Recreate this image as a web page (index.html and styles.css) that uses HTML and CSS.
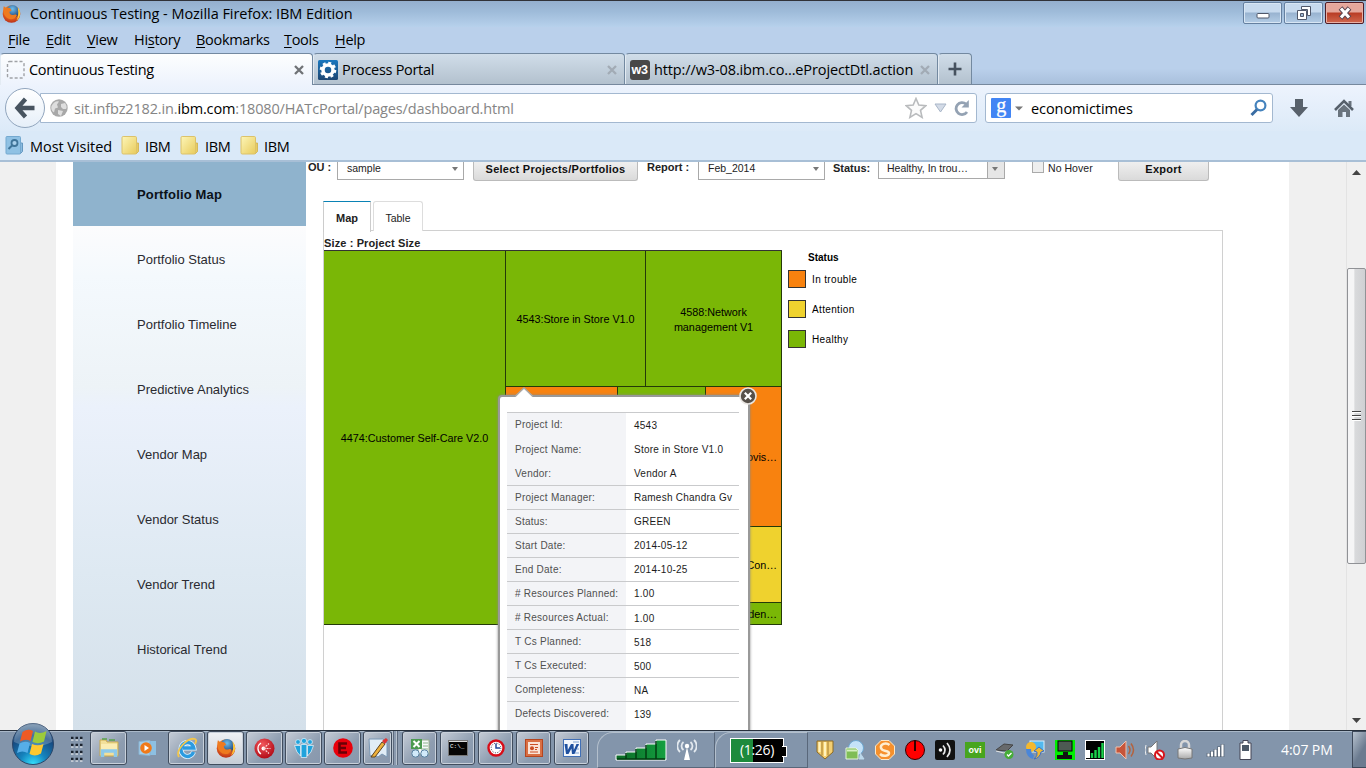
FILE: index.html
```html
<!DOCTYPE html>
<html lang="en">
<head>
<meta charset="utf-8">
<title>Continuous Testing</title>
<link rel="stylesheet" href="styles.css">
</head>
<body>
<svg width="0" height="0" class="defs">
  <defs>
    <linearGradient id="gFolder" x1="0" y1="0" x2="1" y2="1"><stop offset="0" stop-color="#fdf6b8"/><stop offset="1" stop-color="#e8cb5c"/></linearGradient>
    <radialGradient id="gFox" cx=".5" cy=".3" r=".7"><stop offset="0" stop-color="#ffb53a"/><stop offset=".6" stop-color="#e8651d"/><stop offset="1" stop-color="#b8301a"/></radialGradient>
    <radialGradient id="gBlue" cx=".5" cy=".3" r=".7"><stop offset="0" stop-color="#6fc0ee"/><stop offset="1" stop-color="#14376f"/></radialGradient>
    <radialGradient id="gRed" cx=".4" cy=".3" r=".7"><stop offset="0" stop-color="#f2565c"/><stop offset="1" stop-color="#b30d18"/></radialGradient>
    <radialGradient id="gOrb" cx=".5" cy="1" r=".95"><stop offset="0" stop-color="#35e3ff"/><stop offset=".35" stop-color="#1583bd"/><stop offset=".75" stop-color="#174a80"/><stop offset="1" stop-color="#5f7f9f"/></radialGradient>
    <linearGradient id="gGreen" x1="0" x2="1"><stop offset="0" stop-color="#0b6a26"/><stop offset="1" stop-color="#14a040"/></linearGradient>
    <linearGradient id="gGray" x1="0" y1="0" x2="0" y2="1"><stop offset="0" stop-color="#fff"/><stop offset="1" stop-color="#a9a9a9"/></linearGradient>
    <linearGradient id="gFav" x1="0" y1="0" x2="0" y2="1"><stop offset="0" stop-color="#1a78bf"/><stop offset="1" stop-color="#1d4672"/></linearGradient>
    <symbol id="firefox" viewBox="0 0 20 20"><circle cx="10" cy="10.500" r="9.300" fill="url(#gFox)"/><circle cx="11" cy="8" r="7" fill="url(#gBlue)"/><path d="M2 2c1 1.500 2 2.200 3.500 2C8 3.500 9.500 5 10 6.800L7.800 8.200c.2 3 2.500 4 5.200 3 1.600-.6 3 .2 2.500 1.500C13 17 7 17 4 13.500.8 10 1 5 2 2z" fill="#ee7a1f"/><path d="M16.500 3.500c4 4.500 3.300 11-1.500 14 2.500-4 2.500-9 1.500-14z" fill="#ffc83b"/></symbol>
    <symbol id="folder" viewBox="0 0 19 21"><path d="M15 8h2.500v8.500L15 19z" fill="#e7cc62" stroke="#d1ae49" stroke-width=".8"/><rect x="1" y="1.500" width="14.500" height="17.500" rx="1.200" fill="url(#gFolder)" stroke="#dcc26a"/></symbol>
    <symbol id="x" viewBox="0 0 10 10"><path d="M1 1l8 8M9 1L1 9" stroke="currentColor" stroke-width="2.300" fill="none"/></symbol>
  </defs>
</svg>

<header class="chrome">
  <div class="titlebar">
    <svg class="fx" width="19" height="19"><use href="#firefox"/></svg>
    <span class="ui title">Continuous Testing - Mozilla Firefox: IBM Edition</span>
    <div class="winbtns">
      <div class="wb"><svg class="min" width="14" height="8" viewBox="0 0 14 8"><rect x="1" y="1.500" width="12" height="4.500" rx="1" fill="#fff" stroke="#50586a"/></svg></div>
      <div class="wb"><svg width="16" height="16" viewBox="0 0 16 16"><path d="M5.500 1.500h9v9h-3v-6h-6z" fill="#fff" stroke="#50586a"/><path d="M1.500 5.500h9v9h-9zM4.500 8.500v3h3v-3z" fill="#fff" fill-rule="evenodd" stroke="#50586a"/></svg></div>
      <div class="wb close"><svg width="16" height="14" viewBox="0 0 16 14"><path d="M3.500 2l9 10M12.500 2l-9 10" stroke="#5b4550" stroke-width="5"/><path d="M4 2.500l8 9M12 2.500l-8 9" stroke="#fff" stroke-width="3"/></svg></div>
    </div>
  </div>
  <nav class="menu ui">
    <span class="m1"><u>F</u>ile</span><span class="m2"><u>E</u>dit</span><span class="m3"><u>V</u>iew</span><span class="m4">Hi<u>s</u>tory</span><span class="m5"><u>B</u>ookmarks</span><span class="m6"><u>T</u>ools</span><span class="m7"><u>H</u>elp</span>
  </nav>
  <div class="tabs ui">
    <div class="tab current">
      <svg width="20" height="20" viewBox="0 0 20 20"><rect x="1.500" y="1.500" width="16.500" height="16.500" rx="2" fill="none" stroke="#a0a2a6" stroke-width="1.400" stroke-dasharray="3 2"/></svg>
      <span class="t1">Continuous Testing</span><svg class="tx" width="10" height="10"><use href="#x"/></svg>
    </div>
    <div class="tab">
      <svg width="20" height="20" viewBox="0 0 20 20"><rect width="20" height="20" rx="1.500" fill="url(#gFav)"/><circle cx="10" cy="10" r="5" fill="none" stroke="#fff" stroke-width="3.500"/><circle cx="10" cy="10" r="7" fill="none" stroke="#fff" stroke-width="2.600" stroke-dasharray="2.900 2.600"/></svg>
      <span class="t2">Process Portal</span><svg class="tx dim" width="10" height="10"><use href="#x"/></svg>
    </div>
    <div class="tab third">
      <svg width="20" height="20" viewBox="0 0 20 20"><rect width="20" height="20" rx="3" fill="#484848"/><text x="9.500" y="14" text-anchor="middle" font-family="Liberation Sans" font-weight="bold" font-size="12.500" letter-spacing="-.3" fill="#fff">w3</text></svg>
      <span class="t3">http://w3-08.ibm.co...eProjectDtl.action</span><svg class="tx dim" width="10" height="10"><use href="#x"/></svg>
    </div>
    <div class="tab plus"><svg width="14" height="14" viewBox="0 0 14 14"><path d="M7 .5v13M.5 7h13" stroke="#46525f" stroke-width="2.600"/></svg></div>
  </div>
  <div class="navbar ui">
    <div class="back"><svg width="22" height="22" viewBox="0 0 22 22"><path d="M11.500 2L3.500 11l8 9M4 11H20.500" fill="none" stroke="#485460" stroke-width="4.400"/></svg></div>
    <div class="url">
      <svg width="18" height="18" viewBox="0 0 18 18"><circle cx="9" cy="9" r="8.700" fill="#a8a8a8"/><path d="M1.500 7c2-4 5-5.500 7.500-4.500l-2 3 1 3-3 1-1 4C1.500 12 .8 9 1.500 7zM11 5l4-1c2 3 2 5 1 6h-3l-2-2zM8 11l5 1-2 5-3-2z" fill="#dedede"/></svg>
      <span class="addr">sit.infbz2182.in.<b>ibm.com</b>:18080/HATcPortal/pages/dashboard.html</span>
      <span class="urlicons">
        <svg width="22" height="22" viewBox="0 0 22 22"><path d="M11 1.500l2.800 6.600 7 .6-5.300 4.700 1.600 7L11 16.600l-6.100 3.800 1.600-7L1.200 8.700l7-.6z" fill="#fbfbfb" stroke="#b9bbbd" stroke-width="1.600"/></svg>
        <svg width="13" height="10" viewBox="0 0 13 10"><path d="M1 1h11L6.500 9z" fill="#d3dbe7" stroke="#a9b6c8"/></svg>
        <svg width="16" height="16" viewBox="0 0 16 16"><path d="M12 4A6 6 0 1 0 13 12" fill="none" stroke="#94a2b3" stroke-width="2.800"/><path d="M14.800 0v7.500H7.500z" fill="#94a2b3"/></svg>
      </span>
    </div>
    <div class="search">
      <svg width="20" height="20" viewBox="0 0 20 20"><rect width="20" height="20" rx="1" fill="#4285f4"/><text x="10" y="13.500" text-anchor="middle" font-family="Liberation Serif" font-size="20" fill="#fff" stroke="#fff" stroke-width=".3">g</text></svg>
      <svg class="caret" width="8" height="5" viewBox="0 0 8 5"><path d="M0 .5h8L4 4.500z" fill="#777"/></svg>
      <span class="q">economictimes</span>
      <svg class="mag" width="17" height="18" viewBox="0 0 17 18"><circle cx="10.500" cy="6.500" r="4.900" fill="none" stroke="#4583bd" stroke-width="2.200"/><path d="M7 10.500L1.500 16" stroke="#3a6da3" stroke-width="3"/></svg>
    </div>
    <svg class="dl" width="20" height="18" viewBox="0 0 20 18"><path d="M6 0h8v8h5l-9 10L1 8h5z" fill="#58616b"/></svg>
    <svg class="home" width="20" height="19" viewBox="0 0 20 19"><path d="M14.500 2h3v5h-3z" fill="#68727c"/><path d="M1 11l9-9 9 9" fill="none" stroke="#56606b" stroke-width="2.600"/><path d="M4 11l6-5.500 6 5.500v7h-4v-5H8.500v5H4z" fill="#6a747e"/></svg>
  </div>
  <div class="bookmarks ui">
    <svg width="19" height="21" viewBox="0 0 19 21"><path d="M15 8h2.500v8.500L15 19z" fill="#8bbbe0" stroke="#6598c0"/><rect x="1" y="1.500" width="14.500" height="17.500" rx="1" fill="#8fc1e4" stroke="#74a9d0"/><circle cx="9.500" cy="8" r="3" fill="#a9d0ec" stroke="#3f7499" stroke-width="1.800"/><path d="M7 10.500L3.500 14" stroke="#3f7499" stroke-width="2"/></svg>
    <span class="b1">Most Visited</span>
    <svg width="19" height="21"><use href="#folder"/></svg><span class="b2">IBM</span>
    <svg width="19" height="21"><use href="#folder"/></svg><span class="b3">IBM</span>
    <svg width="19" height="21"><use href="#folder"/></svg><span class="b2">IBM</span>
  </div>
</header>

<main class="view">
  <div class="page">
    <aside class="side">
      <div class="item on">Portfolio Map</div>
      <div class="item">Portfolio Status</div>
      <div class="item">Portfolio Timeline</div>
      <div class="item">Predictive Analytics</div>
      <div class="item">Vendor Map</div>
      <div class="item">Vendor Status</div>
      <div class="item">Vendor Trend</div>
      <div class="item">Historical Trend</div>
    </aside>
    <section class="content">
      <div class="filters">
        <b class="lab ou">OU :</b>
        <div class="sel">sample<i class="arr"></i></div>
        <div class="btn wide"><span>Select Projects/Portfolios</span></div>
        <b class="lab rep">Report :</b>
        <div class="sel">Feb_2014<i class="arr"></i></div>
        <b class="lab st">Status:</b>
        <div class="sel multi"><span>Healthy, In trou…</span><em><i class="arr"></i></em></div>
        <i class="check"></i><span class="nohover">No Hover</span>
        <div class="btn exp"><span>Export</span></div>
      </div>
      <div class="ptabs"><div class="pt sel1">Map</div><div class="pt">Table</div></div>
      <div class="panel">
        <div class="size">Size : Project Size</div>
        <div class="row">
          <div class="map">
            <div class="cell a">4474:Customer Self-Care V2.0</div>
            <div class="right">
              <div class="top">
                <div class="cell b">4543:Store in Store V1.0</div>
                <div class="cell c">4588:Network<br>management V1</div>
              </div>
              <div class="bottom">
                <div class="cell orange d"></div>
                <div class="cell e"></div>
                <div class="stack">
                  <div class="cell orange f">ovis…</div>
                  <div class="cell yellow g">Con…</div>
                  <div class="cell h">den…</div>
                </div>
              </div>
            </div>
            <div class="popup">
              <svg class="tip" width="18" height="11" viewBox="0 0 18 11"><path d="M0 10.500L9 1l9 9.500z" fill="#fff"/><path d="M0 9.500L9 1l9 8.500" fill="none" stroke="#aaa" stroke-width="1.500"/></svg>
              <svg class="pclose" width="18" height="18" viewBox="0 0 18 18"><circle cx="9" cy="9" r="8" fill="#56504a" stroke="#e9e6e2" stroke-width="1.600"/><path d="M5.800 5.800l6.400 6.400M12.200 5.800l-6.400 6.400" stroke="#fff" stroke-width="2.200"/></svg>
              <div class="tbl">
                <div class="r first"><span>Project Id:</span><span>4543</span></div>
                <div class="r nb"><span>Project Name:</span><span>Store in Store V1.0</span></div>
                <div class="r"><span>Vendor:</span><span>Vendor A</span></div>
                <div class="r"><span>Project Manager:</span><span>Ramesh Chandra Gv</span></div>
                <div class="r"><span>Status:</span><span>GREEN</span></div>
                <div class="r"><span>Start Date:</span><span>2014-05-12</span></div>
                <div class="r"><span>End Date:</span><span>2014-10-25</span></div>
                <div class="r"><span># Resources Planned:</span><span>1.00</span></div>
                <div class="r low"><span># Resources Actual:</span><span>1.00</span></div>
                <div class="r low"><span>T Cs Planned:</span><span>518</span></div>
                <div class="r low"><span>T Cs Executed:</span><span>500</span></div>
                <div class="r low"><span>Completeness:</span><span>NA</span></div>
                <div class="r low last"><span>Defects Discovered:</span><span>139</span></div>
              </div>
            </div>
          </div>
          <div class="legend">
            <b>Status</b>
            <div class="lg"><i class="orange"></i>In trouble</div>
            <div class="lg"><i class="yellow"></i>Attention</div>
            <div class="lg"><i></i>Healthy</div>
          </div>
        </div>
      </div>
    </section>
  </div>
  <div class="scroll">
    <svg width="10" height="5" viewBox="0 0 10 5"><path d="M0 5h9L4.500 0z" fill="#444"/></svg>
    <div class="thumb"><i></i><i></i><i></i></div>
    <svg width="10" height="5" viewBox="0 0 10 5"><path d="M0 0h9L4.500 5z" fill="#444"/></svg>
  </div>
</main>

<footer class="taskbar">
  <svg class="orb" width="44" height="44" viewBox="0 0 44 44"><circle cx="22" cy="22" r="20.500" fill="url(#gOrb)" stroke="#2b4669"/><path d="M3 20A19 19 0 0 1 41 20C30 26 14 25 3 20z" fill="#fff" opacity=".22"/><path d="M11.500 10q5.500-4 10.500-1l-2.500 10q-5-2.500-10.500.5z" fill="#ee5a24"/><path d="M24 9.500q5 3 11.500-.5L33 19.500q-6 3-11.500.5z" fill="#9ccb3b"/><path d="M8.500 21.500q5.500-3 10.500-.5l-2.500 10q-5-3-10.500 0z" fill="#56aee8"/><path d="M21 22q5.500 2.500 11.500 0L30 31.500q-6 3.500-11.500.5z" fill="#fdc82f"/></svg>
  <svg class="dots" width="12" height="26" viewBox="0 0 12 26"><g stroke="#1c2430" stroke-width="2.500" stroke-dasharray="2.500 2"><path d="M0 2h12M0 9h12M0 16h12M0 23h12"/></g><g stroke="#fff" stroke-width="1" stroke-dasharray="2.500 2"><path d="M0 4h12M0 11h12M0 18h12M0 25h12"/></g></svg>
  <div class="tb"><svg width="22" height="22" viewBox="0 0 22 22"><path d="M2 3h6l1 2h11v14H2z" fill="#f3e09a" stroke="#c9a94e"/><path d="M4 2h5M11 3h6" stroke="#5aa34b" stroke-width="1.500"/><path d="M3 7h16v7H3z" fill="#fbedb4"/><path d="M4.500 20v-6h13v6" fill="none" stroke="#8cc9ea" stroke-width="3.500"/></svg></div>
  <div class="tb flat"><svg width="20" height="20" viewBox="0 0 20 20"><path d="M5 3h13v14H5z" fill="#8dc0e2"/><path d="M1 3.500l11-1v15l-11-1z" fill="#a5cfea" stroke="#87b3d3"/><circle cx="8" cy="10" r="5.800" fill="#f07a1a"/><path d="M6.500 7v6l4.500-3z" fill="#fff"/></svg></div>
  <div class="tb"><svg width="22" height="22" viewBox="0 0 22 22"><path d="M17.500 15A6.500 7 0 1 1 17.800 11H7" fill="none" stroke="#e2f4ff" stroke-width="5"/><path d="M17.500 15A6.500 7 0 1 1 17.800 11H7" fill="none" stroke="#2c9be0" stroke-width="3.400"/><path d="M3 20C-1 14 11 0 19 2c2 1 1 3 0 5" fill="none" stroke="#f3c64b" stroke-width="1.800"/></svg></div>
  <div class="tb lit"><svg width="20" height="20"><use href="#firefox"/></svg></div>
  <div class="tb"><svg width="21" height="21" viewBox="0 0 21 21"><circle cx="10.500" cy="10.500" r="10" fill="url(#gRed)"/><circle cx="9.500" cy="10.500" r="2" fill="#fff"/><path d="M7 5a6.500 6.500 0 0 0 0 11" stroke="#fff" stroke-width="1.300" fill="none"/><path d="M9.500 10.500L15 5.500M9.500 10.500h7M9.500 10.500L15 15.500" stroke="#fbd5d5" stroke-width="1.200" stroke-dasharray="2 1" fill="none"/></svg></div>
  <div class="tb"><svg width="20" height="20" viewBox="0 0 20 20"><g fill="#1fa3dc" stroke="#e9f7fd" stroke-width=".7"><circle cx="4" cy="4" r="2.400"/><circle cx="10" cy="2.900" r="2.600"/><circle cx="16" cy="4" r="2.400"/><path d="M.5 7.500h6V18L3 14zM7.200 6.500h5.600V19.500H7.200zM13.500 7.500h6L17 14l-3.500 4z"/></g></svg></div>
  <div class="tb"><svg width="20" height="20" viewBox="0 0 20 20"><circle cx="10" cy="10" r="9.800" fill="#e8000b"/><path d="M14 5.500H6.500v9H14M6.500 10H13" fill="none" stroke="#6a0006" stroke-width="2.600"/></svg></div>
  <div class="tb narrow"><svg width="20" height="22" viewBox="0 0 20 22"><path d="M1 2h14l4 4v14l-5-3-4 3-4-2-4 1z" fill="#e1edf7" stroke="#7b98b5"/><path d="M3 20L14 5l3 2L7 20z" fill="#eeb13b" stroke="#5e4420"/><path d="M14 4l4-3 2 2-3 4z" fill="#d33"/></svg></div>
  <div class="strips"></div>
  <div class="tb s"><svg width="20" height="20" viewBox="0 0 20 20"><path d="M8 2h11v14H8z" fill="#f6f8fa" stroke="#9ab08f"/><path d="M1 1h11v10H1z" fill="#4b9a50"/><path d="M3.500 3l6 6M9.500 3l-6 6" stroke="#fff" stroke-width="2"/><path d="M13 5h5M13 8h5M11 11h7" stroke="#8ab48a"/><circle cx="5.500" cy="15.500" r="3.700" fill="#d1eafa" stroke="#58809f"/><circle cx="14.500" cy="15.500" r="3.700" fill="#d1eafa" stroke="#58809f"/></svg></div>
  <div class="tb s"><svg width="20" height="16" viewBox="0 0 20 16"><rect x=".5" y=".5" width="19" height="15" fill="#050505" stroke="#777"/><path d="M1 1.500h18" stroke="#ddd"/><text x="2" y="8" font-family="Liberation Mono" font-size="6" fill="#fff">C:\_</text></svg></div>
  <div class="tb s"><svg width="18" height="18" viewBox="0 0 18 18"><circle cx="9" cy="9" r="7.500" fill="#fff" stroke="#d80d18" stroke-width="2.400"/><circle cx="9" cy="9" r="4.800" fill="none" stroke="#334" stroke-dasharray="1 1.500"/><path d="M9 4.500V9h4" stroke="#224a9a" stroke-width="1.500" fill="none"/></svg></div>
  <div class="tb s"><svg width="18" height="18" viewBox="0 0 18 18"><rect x=".5" y=".5" width="17" height="17" fill="#d96f43" stroke="#b5451f"/><rect x="3" y="3" width="12" height="12" fill="#fae3d6"/><path d="M5 5.500h8M5 13h8" stroke="#cb4f25" stroke-width="1.200"/><circle cx="7" cy="9.300" r="2" fill="#cb4f25"/><path d="M10 8.500h3M10 10.500h2" stroke="#cb4f25"/></svg></div>
  <div class="tb s"><svg width="18" height="18" viewBox="0 0 18 18"><rect x=".5" y=".5" width="17" height="17" fill="#f2f6fc" stroke="#416fb5"/><path d="M10 3h6M13 6h3M14 10h2M12 14h4" stroke="#7fa2d2"/><path d="M1.500 5h3l.3 6L8 5h2.500l.3 6L13.500 5H16l-4.500 10H9l-.6-5.500L5.500 15H3z" fill="#1f509f"/></svg></div>
  <div class="pan p1">
    <svg width="52" height="22" viewBox="0 0 52 22"><path d="M1 16h10v-3h10v-4h10V5h10V1h10v20H1z" fill="url(#gGreen)" stroke="#fff"/><path d="M11 14v6M21 10v10M31 6v14M41 2v18M2 20h48" stroke="#033c12" stroke-width="1.500"/></svg>
    <svg width="20" height="22" viewBox="0 0 20 22"><path d="M10 8l3 13H7z" fill="#fff"/><circle cx="10" cy="7" r="2.200" fill="#fff"/><g fill="none" stroke="#e3e9ef" stroke-width="1.800"><path d="M6.500 3a5 5 0 0 0 0 8M13.500 3a5 5 0 0 1 0 8M3 1a8 8 0 0 0 0 12M17 1a8 8 0 0 1 0 12"/></g></svg>
  </div>
  <div class="pan p2"><div class="batt"><span class="ui">(1:26)</span></div></div>
  <div class="tray">
    <svg viewBox="0 0 20 20"><path d="M2 1h16v11l-8 7-8-7z" fill="#f4cf72" stroke="#8d6a22"/><path d="M7 1.500v14M13 1.500v14" stroke="#a27a2b"/><path d="M4.500 2v10M10 2v14" stroke="#fff3bd" stroke-width="2"/></svg>
    <svg viewBox="0 0 20 20"><circle cx="11" cy="8" r="7.500" fill="#c4e2f8" stroke="#6ca6d0"/><path d="M15 13l4 6h-5" stroke="#bcd9ec" fill="#bcd9ec"/><path d="M1 8h10l2 2v9H1z" fill="#7fbd55" stroke="#e6f5dc"/><path d="M2 10.500h10" stroke="#d5efc0" stroke-width="2"/></svg>
    <svg viewBox="0 0 20 20"><path d="M6 .5h8L19.500 6v8L14 19.500H6L.5 14V6z" fill="#f6902c" stroke="#fde7c4"/><path d="M14.500 5C11 2 5 4 6 8s8 2 8 5-6 4-9 1" fill="none" stroke="#ffeecf" stroke-width="2.500"/></svg>
    <svg viewBox="0 0 20 20"><circle cx="10" cy="10" r="9.500" fill="#f00" stroke="#300"/><path d="M10 0v11" stroke="#300" stroke-width="2"/></svg>
    <svg viewBox="0 0 20 20"><rect width="20" height="20" rx="2" fill="#111"/><circle cx="5.500" cy="10" r="1.800" fill="#fff"/><path d="M8 5.500q4 4.500 0 9M12 3q6 7 0 14" fill="none" stroke="#e8e8e8" stroke-width="1.700"/></svg>
    <svg viewBox="0 0 20 20"><rect y="2" width="20" height="16" fill="#47a51e"/><text x="10" y="13" text-anchor="middle" font-family="Liberation Sans" font-weight="bold" font-size="9" fill="#fff">ovi</text></svg>
    <svg viewBox="0 0 20 20"><path d="M1 10L9 4l9 1-6 6z" fill="#67696b" stroke="#444"/><path d="M1 11l8 2 3-2" stroke="#e5e5e5" fill="none"/><circle cx="14" cy="14.500" r="4.500" fill="#46ad38"/><path d="M12 14.500l1.500 1.500 3-3" stroke="#fff" fill="none" stroke-width="1.300"/></svg>
    <svg viewBox="0 0 20 20"><rect x="5" y="1" width="14" height="11" fill="#52b9ef" stroke="#d9effc"/><circle cx="6" cy="7" r="5" fill="#f5b82d"/><path d="M1 9q0 8 7 10l1-4q-3-1-3-6z" fill="#4a86d8"/><path d="M14 7l5 4-3 1q-1 6-7 7 4-3 3-7l-3-1z" fill="#f0b832" stroke="#3d70c4"/></svg>
    <svg viewBox="0 0 20 20"><rect width="20" height="20" fill="#00f000"/><rect x="3" y="1" width="14" height="10" fill="#4d5a53" stroke="#000"/><path d="M8 12h5v3H8zM2 15h15v4H2z" fill="#111"/></svg>
    <svg viewBox="0 0 20 20"><rect x=".5" y=".5" width="19" height="19" fill="#000" stroke="#fff"/><path d="M7 18v-5M10.500 18V10M14 18V7M17.500 18V3" stroke="#19d24b" stroke-width="2.400"/><path d="M1 10h4v8H1z" fill="#fff"/></svg>
    <svg viewBox="0 0 20 20"><path d="M1 7h4l6-6v18l-6-6H1z" fill="#c6553a" stroke="#f1c2ad"/><path d="M13.500 6q3 4 0 8M16 3.500q5 6.500 0 13" fill="none" stroke="#b4623d" stroke-width="1.500"/></svg>
    <svg viewBox="0 0 20 20"><path d="M3 7h3l6-6v18l-6-6H3z" fill="#fff" stroke="#777"/><path d="M1 5q-2 5 0 10" stroke="#eee" fill="none"/><circle cx="14.500" cy="15" r="4.500" fill="#fff" stroke="#d8141b" stroke-width="2"/><path d="M11.500 12l6 6" stroke="#d8141b" stroke-width="2"/></svg>
    <svg viewBox="0 0 20 20"><path d="M6 9V5a4 4 0 0 1 8 0v4" fill="none" stroke="#d8d8d8" stroke-width="2.500"/><path d="M3 9q7-3 14 0v9q-7 2-14 0z" fill="url(#gGray)" stroke="#777"/></svg>
    <svg viewBox="0 0 20 20"><path d="M3.500 17v-4M7 17v-6M10.500 17V9M14 17V6.500M17.500 17V4" stroke="#4f5e70" stroke-width="3.600"/><path d="M3.500 16.500v-3M7 16.500v-5M10.500 16.500v-7M14 16.500V7M17.500 16.500v-12" stroke="#fff" stroke-width="2.200"/></svg>
    <svg viewBox="0 0 20 20"><path d="M8 .5h5V3h3v16.500H5V3h3z" fill="#fff" stroke="#445"/><path d="M7 5h7v6H7z" fill="#4c5867"/></svg>
  </div>
  <span class="clock ui">4:07 PM</span>
  <div class="desk"></div>
</footer>
</body>
</html>
```
FILE: styles.css
```css
* { box-sizing: border-box; }
body { margin: 0; width: 1366px; height: 768px; overflow: hidden; display: flex; flex-direction: column; font-family: "Liberation Sans", Arial, sans-serif; font-size: 11px; background: #fff; color: #222; }
svg { display: block; flex: none; }
.defs { position: absolute; }
span, b { white-space: nowrap; }
.ui { font-family: "Open Sans", "Noto Sans", sans-serif; font-size: 14.500px; letter-spacing: -0.300px; color: #000; }

/* Browser window */
.chrome { height: 162px; flex: none; border-bottom: 2px solid #a8bfd6; background: #dae9f8; }
.titlebar { height: 27px; border-top: 1px solid #303238; background: linear-gradient(#94afce, #9ebbd9 40%, #b7d1ec); display: flex; align-items: center; padding: 0 0 1px 2px; }
.title { margin-left: 9px; letter-spacing: -0.050px; }
.winbtns { margin-left: auto; display: flex; gap: 2px; padding-right: 2px; align-self: flex-start; margin-top: 1px; }
.wb { width: 39px; height: 22px; border: 1px solid #6580a0; border-radius: 2px; background: linear-gradient(#c7daee 45%, #98b3d0 50%, #b4cde6); box-shadow: inset 0 0 0 1px #d8e6f4; display: flex; align-items: center; justify-content: center; }
.min { margin-top: 6px; }
.wb.close { border-color: #501c26; background: linear-gradient(#e5a79c 45%, #b93c25 50%, #d0684f); box-shadow: inset 0 0 0 1px #e9b0a5; }
.menu { height: 26px; background: #bad0eb; display: flex; align-items: center; padding: 0 0 2px 8px; }
.menu u { text-underline-offset: 2px; text-decoration-thickness: 1px; }
.m1 { width: 38px; } .m2 { width: 41px; } .m3 { width: 47px; } .m4 { width: 62px; } .m5 { width: 88px; } .m6 { width: 51px; }
.tabs { height: 32px; background: linear-gradient(#bad0eb 50%, #a9c0dc); display: flex; border-bottom: 1px solid #76889d; }
.tab { width: 312px; height: 31px; border: 1px solid #7389a0; border-left-color: #e3ebf3; border-bottom: 0; border-radius: 4px 4px 0 0; background: linear-gradient(#d0dde9, #b3c1ce); display: flex; align-items: center; padding: 1px 7px 0 4px; gap: 4px; }
.tab.current { height: 32px; width: 313px; background: linear-gradient(#fdfefe, #edf3fd); padding: 0 8px 0 5px; gap: 3px; }
.tab.third { width: 313px; }
.tab.plus { width: 34px; justify-content: center; padding: 0; }
.t3 { letter-spacing: -0.120px; }
.tx { margin-left: auto; color: #6f7276; }
.tx.dim { color: #a2abb5; }
.navbar { height: 46px; background: linear-gradient(#edf3fd, #dceaf8); display: flex; align-items: center; padding-left: 5px; }
.back { width: 40px; height: 40px; border: 1px solid #91a5bd; border-radius: 50%; background: linear-gradient(#fff, #e6eff9); display: flex; align-items: center; justify-content: center; position: relative; z-index: 1; }
.url { width: 937px; height: 30px; margin-left: -5px; border: 1px solid #a3b8d0; border-radius: 0 3px 3px 0; background: #fff; display: flex; align-items: center; padding-left: 9px; }
.addr { color: #858585; margin-left: 6px; letter-spacing: -0.150px; }
.addr b { font-weight: 400; color: #000; }
.urlicons { margin-left: auto; display: flex; align-items: center; gap: 7px; padding-right: 6px; }
.search { width: 288px; height: 30px; margin-left: 8px; border: 1px solid #a3b8d0; border-radius: 3px; background: #fff; display: flex; align-items: center; padding: 0 5px; }
.q { letter-spacing: -0.080px; }
.caret { margin: 0 8px 0 4px; }
.mag { margin-left: auto; }
.dl { margin-left: 16px; }
.home { margin-left: 25px; }
.bookmarks { height: 29px; display: flex; align-items: center; padding: 0 0 1px 5px; }
.bookmarks span { padding-top: 2px; }
.b1 { margin-left: 6px; width: 91px; letter-spacing: -0.050px; }
.b2 { margin-left: 5px; width: 35px; }
.b3 { margin-left: 6px; width: 35px; }

/* Page area */
.view { height: 568px; flex: none; display: flex; background: #f0f0f0; overflow: hidden; padding-left: 56px; }
.page { width: 1233px; background: #fff; padding-left: 17px; display: flex; margin-right: 57px; }
.side { width: 233px; background: linear-gradient(#fcfcfd 64px, #f4f9fd 115px, #edf3f7 225px, #ebf1fb 245px, #dee9f2 410px, #d4e0ea 568px); font-size: 13px; letter-spacing: 0; }
.item { height: 65px; padding: 1px 0 0 64px; display: flex; align-items: center; color: #2a2a30; }
.item.on { height: 64px; padding-top: 0; background: #8fb3cd; font-weight: bold; color: #0b1118; letter-spacing: 0.150px; }
.content { padding-left: 2px; width: 983px; }
.filters { height: 20px; display: flex; align-items: flex-start; }
.lab { font-size: 11px; line-height: 10px; color: #222; }
.ou { width: 29px; }
.sel { width: 127px; height: 18px; border: 1px solid #a9a9a9; border-top: 0; padding: 0 5px 0 9px; line-height: 13px; font-size: 10.500px; display: flex; justify-content: space-between; }
.arr { width: 0; height: 0; margin-top: 5px; border: 3.500px solid transparent; border-top: 4px solid #777; border-bottom: 0; }
.btn { height: 19px; border: 1px solid #bbb; border-top: 0; border-radius: 0 0 3px 3px; background: linear-gradient(#efefef, #dadada); font-weight: bold; font-size: 11px; letter-spacing: 0.250px; line-height: 15px; text-align: center; color: #111; }
.wide { width: 165px; margin: 0 9px; }
.rep { width: 51px; }
.st { width: 45px; margin-left: 8px; line-height: 12px; }
.multi { height: 17px; padding: 0 0 0 8px; }
.multi em { width: 17px; border-left: 1px solid #a9a9a9; background: #e6e6e6; padding-left: 4px; }
.multi .arr { display: block; }
.check { width: 12px; height: 11px; border: 1px solid #aaa; border-top: 0; background: #eee; margin-left: 27px; }
.nohover { margin-left: 4px; font-size: 10.500px; letter-spacing: 0.050px; line-height: 13px; width: 70px; }
.exp { width: 91px; }
.ptabs { display: flex; height: 49px; align-items: flex-end; padding-left: 15px; gap: 2px; }
.pt { width: 50px; height: 30px; border: 1px solid #ddd; border-bottom: 0; border-radius: 3px 3px 0 0; text-align: center; padding-top: 10px; line-height: 13px; background: #fff; font-size: 10.500px; }
.pt.sel1 { width: 48px; height: 31px; border-top: 1px solid #0a82b5; border-radius: 0; font-weight: bold; font-size: 11px; position: relative; z-index: 2; margin-bottom: -1px; border-left-color: #ccc; border-right-color: #ccc; }
.panel { margin: -1px 0 0 15px; width: 900px; height: 520px; border: 1px solid #d0d0d0; }
.size { height: 20px; font-weight: bold; font-size: 11px; letter-spacing: 0.120px; line-height: 24px; padding-left: 0; }
.row { display: flex; margin-top: -1px; }

/* Treemap */
.map { display: flex; width: 458px; height: 375px; position: relative; border-top: 1px solid #333; }
.cell { background: #7ab706; border-right: 1px solid #243a08; border-bottom: 1px solid #243a08; display: flex; align-items: center; justify-content: center; text-align: center; line-height: 15px; font-size: 10.800px; color: #000; white-space: nowrap; padding-top: 2px; }
.cell.orange, i.orange { background: #f8820f !important; }
.cell.yellow, i.yellow { background: #efd22e !important; }
.a { width: 182px; }
.right { width: 276px; }
.top { display: flex; height: 136px; } .b { width: 140px; } .c { width: 136px; }
.bottom { display: flex; height: 238px; } .d { width: 112px; } .e { width: 88px; } .stack { width: 76px; }
.f { height: 140px; } .g { height: 76px; } .h { height: 22px; }
.stack .cell { justify-content: flex-end; padding-right: 4px; }
.popup { position: absolute; left: 174px; top: 144px; width: 252px; height: 400px; border: 2px solid #999; background: #fff; border-radius: 4px; padding: 15px 7px 0; box-shadow: 0 0 3px #888; font-size: 10px; letter-spacing: 0.250px; }
.tip { position: absolute; left: 15px; top: -10px; }
.pclose { position: absolute; right: -9px; top: -10px; }
.tbl { border-top: 1px solid #c9cacc; width: 232px; }
.r { display: flex; height: 24px; line-height: 23px; border-bottom: 1px solid #c9cacc; }
.r.first, .r.nb { border-bottom: 0; } .r.first { height: 25px; }
.r.last { border-bottom: 0; height: 40px; }
.r span:first-child { width: 119px; background: #f3f4f7; padding-left: 8px; color: #505050; }
.r span:last-child { padding-left: 8px; color: #1c1c1c; }
.r.first span:last-child, .r.low span:last-child { line-height: 25px; }
.legend { padding: 2px 0 0 6px; font-size: 10px; letter-spacing: 0.350px; color: #000; }
.legend b { display: block; padding-left: 20px; line-height: 12px; height: 18px; letter-spacing: 0; }
.lg { display: flex; align-items: center; height: 18px; margin-bottom: 12px; gap: 6px; }
.lg i { width: 18px; height: 18px; background: #7ab706; border: 1px solid #333; }

/* Page scrollbar */
.scroll { width: 20px; background: #f0f0f0; border-left: 1px solid #e3e3e3; display: flex; flex-direction: column; align-items: center; padding: 8px 0 7px; justify-content: space-between; }
.thumb { width: 19px; height: 296px; margin-top: -61px; border: 1px solid #909296; border-radius: 2px; background: linear-gradient(90deg, #f5f5f6 35%, #d9dadc 40%, #cfd0d3); display: flex; flex-direction: column; align-items: center; justify-content: center; gap: 2px; }
.thumb i { width: 9px; height: 2px; border-top: 1px solid #444; border-bottom: 1px solid #fff; }

/* Taskbar */
.taskbar { height: 38px; flex: none; background: #8395ab; border-top: 1px solid #27303c; box-shadow: inset 0 1px #a9b8c8; position: relative; display: flex; align-items: flex-start; padding-left: 70px; }
.orb { position: absolute; left: 11px; top: -9px; }
.dots { margin: 5px 7px 0 1px; }
.tb { width: 37px; height: 34px; flex: none; margin-right: 2px; border: 1px solid #414d5e; border-radius: 3px; background: linear-gradient(135deg, #c5ccd6, #8e9db0 60%, #8797ad); box-shadow: inset 0 0 0 1px #c8d0da; display: flex; align-items: center; justify-content: center; }
.tb.flat { background: none; border-color: transparent; box-shadow: none; }
.tb.lit { background: linear-gradient(#f0f2f5, #c5ccd5); }
.tb.narrow { width: 29px; margin-right: 0; }
.strips { width: 8px; height: 34px; margin-right: 2px; flex: none; background: repeating-linear-gradient(90deg, #b9c3cf 0 1px, #5d6a7d 1px 2px, #8b9aae 2px 4px); }
.tb.s { width: 35px; margin-right: 3px; }
.pan { height: 36px; flex: none; margin-top: 1px; border-top: 1px solid #b3bfcc; border-left: 1px solid #b3bfcc; border-right: 1px solid #59677a; border-bottom: 1px solid #59677a; border-radius: 16px 0 0 0; display: flex; align-items: center; }
.p1 { width: 118px; margin-left: 5px; gap: 10px; padding-left: 17px; }
.p2 { width: 93px; padding-left: 14px; }
.batt { width: 54px; height: 25px; border: 1px solid #fff; background: linear-gradient(90deg, #1d8a3c 42%, #000 43%); display: flex; justify-content: center; align-items: center; position: relative; }
.batt::after { content: ""; position: absolute; right: -4px; top: 7px; width: 4px; height: 9px; background: #000; border: 1px solid #fff; border-left: 0; }
.batt span { color: #fff; font-size: 14px; margin-top: -2px; }
.tray { display: flex; gap: 10px; margin: 9px 0 0 7px; }
.tray svg { width: 20px; height: 20px; }
.clock { color: #fff; font-size: 14px; letter-spacing: -0.100px; line-height: 20px; margin: 9px 0 0 26px; }
.desk { margin-left: auto; width: 14px; height: 37px; border: 1px solid #3e4a5b; border-right: 0; background: linear-gradient(120deg, #b8c3cf, #6b7b90 60%); }
```
